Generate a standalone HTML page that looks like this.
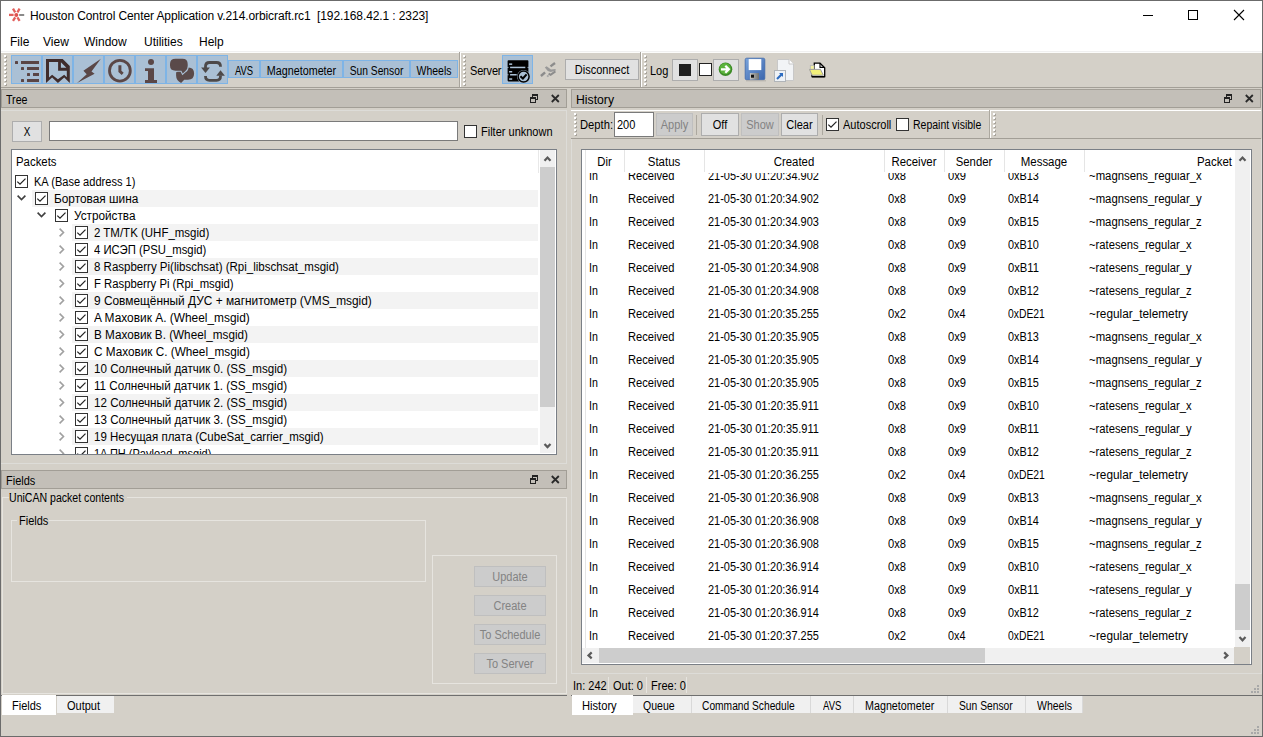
<!DOCTYPE html>
<html><head><meta charset="utf-8"><style>
html,body{margin:0;padding:0;}
body{width:1263px;height:737px;position:relative;overflow:hidden;background:#d4d0c8;font-family:"Liberation Sans", sans-serif;font-size:12px;color:#000;}
div{position:absolute;}
.t{white-space:nowrap;line-height:14px;font-size:12px;transform:scaleX(0.917);transform-origin:0 0;}
.tc{transform-origin:50% 0;}
.tr{transform-origin:100% 0;}
.m{white-space:nowrap;line-height:14px;font-size:12px;}
</style></head><body>
<div style="left:0px;top:0px;width:1263px;height:31px;background:#fff"></div>
<svg style="position:absolute;left:0px;top:0px;" width="30" height="30" viewBox="0 0 30 30"><g stroke="#e0524e" stroke-width="2.3" opacity="0.92"><line x1="9" y1="14.9" x2="13.6" y2="14.9"/><line x1="13" y1="8.7" x2="15.2" y2="12.4"/><line x1="19.6" y1="8.7" x2="17.4" y2="12.4"/><line x1="13" y1="20.9" x2="15.2" y2="17.4"/><line x1="19.6" y1="20.9" x2="17.4" y2="17.4"/></g><circle cx="16.3" cy="14.9" r="2" fill="#e0524e"/><rect x="19.2" y="14" width="5" height="2" fill="#8a8a8a"/></svg>
<div class="m" style="left:30px;top:9px;letter-spacing:-0.1px">Houston Control Center Application v.214.orbicraft.rc1&nbsp; [192.168.42.1 : 2323]</div>
<div style="left:1143px;top:15px;width:10px;height:1px;background:#000"></div>
<div style="left:1188px;top:10px;width:10px;height:10px;border:1px solid #000;box-sizing:border-box"></div>
<svg style="position:absolute;left:1233px;top:9px;" width="12" height="12" viewBox="0 0 12 12"><path d="M1 1L11 11M11 1L1 11" stroke="#000" stroke-width="1.1"/></svg>
<div style="left:0px;top:31px;width:1263px;height:21px;background:#fff"></div>
<div style="left:0px;top:51px;width:1263px;height:1px;background:#f0f0f0"></div>
<div class="m" style="left:10px;top:35px;">File</div>
<div class="m" style="left:43px;top:35px;">View</div>
<div class="m" style="left:84px;top:35px;">Window</div>
<div class="m" style="left:144px;top:35px;">Utilities</div>
<div class="m" style="left:199px;top:35px;">Help</div>
<div style="left:0px;top:52px;width:1263px;height:36px;background:#d4d0c8"></div>
<div style="left:0px;top:52px;width:1263px;height:1px;background:#fcfcfb"></div>
<div style="left:0px;top:87px;width:1263px;height:1px;background:#a39f97"></div>
<div style="left:5px;top:56px;width:2px;height:2px;background:#a8a49c"></div>
<div style="left:4px;top:55px;width:2px;height:2px;background:#fff"></div>
<div style="left:5px;top:60px;width:2px;height:2px;background:#a8a49c"></div>
<div style="left:4px;top:59px;width:2px;height:2px;background:#fff"></div>
<div style="left:5px;top:64px;width:2px;height:2px;background:#a8a49c"></div>
<div style="left:4px;top:63px;width:2px;height:2px;background:#fff"></div>
<div style="left:5px;top:68px;width:2px;height:2px;background:#a8a49c"></div>
<div style="left:4px;top:67px;width:2px;height:2px;background:#fff"></div>
<div style="left:5px;top:72px;width:2px;height:2px;background:#a8a49c"></div>
<div style="left:4px;top:71px;width:2px;height:2px;background:#fff"></div>
<div style="left:5px;top:76px;width:2px;height:2px;background:#a8a49c"></div>
<div style="left:4px;top:75px;width:2px;height:2px;background:#fff"></div>
<div style="left:5px;top:80px;width:2px;height:2px;background:#a8a49c"></div>
<div style="left:4px;top:79px;width:2px;height:2px;background:#fff"></div>
<div style="left:5px;top:84px;width:2px;height:2px;background:#a8a49c"></div>
<div style="left:4px;top:83px;width:2px;height:2px;background:#fff"></div>
<div style="left:11px;top:55px;width:31px;height:29px;background:#aac0d5;border:1px solid #7eb4e6;box-sizing:border-box"></div>
<svg style="position:absolute;left:11px;top:55px;" width="31" height="29" viewBox="0 0 31 29"><g fill="#5a4545"><rect x="4" y="6" width="3" height="3" rx="0.6"/><rect x="10" y="6" width="18" height="3"/><rect x="10" y="12" width="3" height="3" rx="0.6"/><rect x="16" y="12" width="12" height="3"/><rect x="16" y="18" width="3" height="3" rx="0.6"/><rect x="22" y="18" width="6" height="3"/><rect x="10" y="24" width="3" height="3" rx="0.6"/><rect x="16" y="24" width="12" height="3"/></g></svg>
<div style="left:42px;top:55px;width:31px;height:29px;background:#aac0d5;border:1px solid #7eb4e6;box-sizing:border-box"></div>
<svg style="position:absolute;left:42px;top:55px;" width="31" height="29" viewBox="0 0 31 29"><path fill="#3f2c2c" fill-rule="evenodd" d="M4 4 H20.7 L27.8 11.1 V27.9 L22.2 22.6 L15.9 27.9 L10.1 22.6 L4 27.9 Z M7 7 H16.1 V15.7 H24.8 V22.2 L22.2 19.8 L15.9 24.3 L10.1 19.8 L7 22.5 Z M18.9 7.2 V12.7 H24.4 Z"/></svg>
<div style="left:73px;top:55px;width:31px;height:29px;background:#aac0d5;border:1px solid #7eb4e6;box-sizing:border-box"></div>
<svg style="position:absolute;left:73px;top:55px;" width="31" height="29" viewBox="0 0 31 29"><path fill="#5a4747" d="M27.9 3.8 L10.4 15.7 L13.7 19.3 L4.1 27.9 L21.6 18.8 L18.5 16.5 Z"/></svg>
<div style="left:104px;top:55px;width:31px;height:29px;background:#aac0d5;border:1px solid #7eb4e6;box-sizing:border-box"></div>
<svg style="position:absolute;left:104px;top:55px;" width="31" height="29" viewBox="0 0 31 29"><circle cx="15.9" cy="15.7" r="10.4" fill="none" stroke="#5a4747" stroke-width="2.8"/><path d="M15.9 10.2 V16.4 L18.7 18.8" fill="none" stroke="#5a4747" stroke-width="3" stroke-linejoin="miter"/></svg>
<div style="left:135px;top:55px;width:31px;height:29px;background:#aac0d5;border:1px solid #7eb4e6;box-sizing:border-box"></div>
<svg style="position:absolute;left:135px;top:55px;" width="31" height="29" viewBox="0 0 31 29"><g fill="#5a4747"><circle cx="16" cy="6.9" r="3"/><path d="M10 13.2 H19 V25.1 H22 V28 H10 V25.1 H13 V16 H10 Z"/></g></svg>
<div style="left:166px;top:55px;width:31px;height:29px;background:#aac0d5;border:1px solid #7eb4e6;box-sizing:border-box"></div>
<svg style="position:absolute;left:166px;top:55px;" width="31" height="29" viewBox="0 0 31 29"><g fill="#5a4a4a"><path d="M16 12.5 H22.5 Q28.1 12.5 28.1 18.6 Q28.1 24.8 22 24.8 H18.2 L15.1 27.9 Q10.1 25.5 10.1 20.5 V17.5 Z"/><path d="M9.5 3.8 H16.5 Q21.7 3.8 21.7 9 V11 Q21.7 14.8 19.2 16.2 L16.7 18.5 L15.4 15.7 H9.5 Q4 15.7 4 10.5 V9 Q4 3.8 9.5 3.8 Z" stroke="#aac0d5" stroke-width="2.2"/><path d="M9.5 3.8 H16.5 Q21.7 3.8 21.7 9 V11 Q21.7 14.8 19.2 16.2 L16.7 18.5 L15.4 15.7 H9.5 Q4 15.7 4 10.5 V9 Q4 3.8 9.5 3.8 Z"/></g></svg>
<div style="left:197px;top:55px;width:31px;height:29px;background:#aac0d5;border:1px solid #7eb4e6;box-sizing:border-box"></div>
<svg style="position:absolute;left:197px;top:55px;" width="31" height="29" viewBox="0 0 31 29"><g fill="none" stroke="#4d4949" stroke-width="2.8"><path d="M8.5 13 V11.5 Q8.5 7.5 12.5 7.5 H19.5 Q23.5 7.5 23.5 11.5 V11.8"/><path d="M8.5 21 V21.3 Q8.5 25.3 12.5 25.3 H19.5 Q23.5 25.3 23.5 21.3 V20.5"/></g><g fill="#4d4949"><path d="M4.1 12.4 H12.9 L8.5 18 Z"/><path d="M19.3 20.8 H27.9 L23.5 15.2 Z"/></g></svg>
<div style="left:228px;top:60px;width:32px;height:18px;background:#aac0d5;border:1px solid #7eb4e6;box-sizing:border-box"></div>
<div class="t tc" style="left:228px;top:64px;width:32px;text-align:center;;transform:scaleX(0.7876)">AVS</div>
<div style="left:260px;top:60px;width:83px;height:18px;background:#aac0d5;border:1px solid #7eb4e6;box-sizing:border-box"></div>
<div class="t tc" style="left:260px;top:64px;width:83px;text-align:center;;transform:scaleX(0.8958)">Magnetometer</div>
<div style="left:343px;top:60px;width:67px;height:18px;background:#aac0d5;border:1px solid #7eb4e6;box-sizing:border-box"></div>
<div class="t tc" style="left:343px;top:64px;width:67px;text-align:center;;transform:scaleX(0.8550)">Sun Sensor</div>
<div style="left:410px;top:60px;width:48px;height:18px;background:#aac0d5;border:1px solid #7eb4e6;box-sizing:border-box"></div>
<div class="t tc" style="left:410px;top:64px;width:48px;text-align:center;;transform:scaleX(0.8722)">Wheels</div>
<div style="left:459px;top:52px;width:1px;height:35px;background:#a8a49c"></div>
<div style="left:460px;top:52px;width:1px;height:35px;background:#fff"></div>
<div style="left:464px;top:56px;width:2px;height:2px;background:#a8a49c"></div>
<div style="left:463px;top:55px;width:2px;height:2px;background:#fff"></div>
<div style="left:464px;top:60px;width:2px;height:2px;background:#a8a49c"></div>
<div style="left:463px;top:59px;width:2px;height:2px;background:#fff"></div>
<div style="left:464px;top:64px;width:2px;height:2px;background:#a8a49c"></div>
<div style="left:463px;top:63px;width:2px;height:2px;background:#fff"></div>
<div style="left:464px;top:68px;width:2px;height:2px;background:#a8a49c"></div>
<div style="left:463px;top:67px;width:2px;height:2px;background:#fff"></div>
<div style="left:464px;top:72px;width:2px;height:2px;background:#a8a49c"></div>
<div style="left:463px;top:71px;width:2px;height:2px;background:#fff"></div>
<div style="left:464px;top:76px;width:2px;height:2px;background:#a8a49c"></div>
<div style="left:463px;top:75px;width:2px;height:2px;background:#fff"></div>
<div style="left:464px;top:80px;width:2px;height:2px;background:#a8a49c"></div>
<div style="left:463px;top:79px;width:2px;height:2px;background:#fff"></div>
<div style="left:464px;top:84px;width:2px;height:2px;background:#a8a49c"></div>
<div style="left:463px;top:83px;width:2px;height:2px;background:#fff"></div>
<div class="t" style="left:470px;top:64px;letter-spacing:-0.2px">Server</div>
<div style="left:502px;top:55px;width:31px;height:29px;background:#aac0d5;border:1px solid #7eb4e6;box-sizing:border-box"></div>
<svg style="position:absolute;left:502px;top:55px;" width="31" height="29" viewBox="0 0 31 29"><rect x="5.6" y="5.3" width="20.8" height="21.1" rx="0.8" fill="#000"/><g fill="#aac0d5"><rect x="8.1" y="11.7" width="15.2" height="1.5"/><rect x="5.3" y="11.9" width="1.1" height="1.1"/><rect x="25.6" y="11.9" width="1.1" height="1.1"/><rect x="8.1" y="19" width="6.6" height="1.5"/><rect x="5.3" y="19.2" width="1.1" height="1.1"/><rect x="7.1" y="8.4" width="3.1" height="1.5"/><rect x="7.1" y="16" width="3.1" height="1.5"/><rect x="7.1" y="23.3" width="3.1" height="1.5"/></g><circle cx="21.6" cy="21.6" r="6.6" fill="#aac0d5"/><circle cx="21.6" cy="21.6" r="5.5" fill="#aac0d5" stroke="#000" stroke-width="1.5"/><path d="M18.4 21.2 L20.9 23.5 L24.6 19.4" stroke="#000" stroke-width="2.1" fill="none"/></svg>
<svg style="position:absolute;left:0px;top:0px;" width="600" height="90" viewBox="0 0 600 90"><g stroke="#8c8c8c" stroke-width="2.4" fill="none"><path d="M540.9 76 L545.1 72.4"/><path d="M550.5 66.4 L555 63"/><path d="M548.6 73.6 L550.6 74.8 L555.4 71.4" stroke-width="2"/></g><path d="M544.8 67.6 L546.6 66.2 L551 69.5 L555.6 69 L555.6 70.8 L550.6 71.9 L547.8 71 Z" fill="#999"/><circle cx="547.8" cy="76.1" r="1.1" fill="#a8a8a8"/></svg>
<div style="left:565px;top:59px;width:74px;height:21px;background:#e1e1e1;border:1px solid #adadad;box-sizing:border-box"></div>
<div class="t tc" style="left:565px;top:63px;width:74px;text-align:center;">Disconnect</div>
<div style="left:640px;top:52px;width:1px;height:35px;background:#a8a49c"></div>
<div style="left:641px;top:52px;width:1px;height:35px;background:#fff"></div>
<div style="left:645px;top:56px;width:2px;height:2px;background:#a8a49c"></div>
<div style="left:644px;top:55px;width:2px;height:2px;background:#fff"></div>
<div style="left:645px;top:60px;width:2px;height:2px;background:#a8a49c"></div>
<div style="left:644px;top:59px;width:2px;height:2px;background:#fff"></div>
<div style="left:645px;top:64px;width:2px;height:2px;background:#a8a49c"></div>
<div style="left:644px;top:63px;width:2px;height:2px;background:#fff"></div>
<div style="left:645px;top:68px;width:2px;height:2px;background:#a8a49c"></div>
<div style="left:644px;top:67px;width:2px;height:2px;background:#fff"></div>
<div style="left:645px;top:72px;width:2px;height:2px;background:#a8a49c"></div>
<div style="left:644px;top:71px;width:2px;height:2px;background:#fff"></div>
<div style="left:645px;top:76px;width:2px;height:2px;background:#a8a49c"></div>
<div style="left:644px;top:75px;width:2px;height:2px;background:#fff"></div>
<div style="left:645px;top:80px;width:2px;height:2px;background:#a8a49c"></div>
<div style="left:644px;top:79px;width:2px;height:2px;background:#fff"></div>
<div style="left:645px;top:84px;width:2px;height:2px;background:#a8a49c"></div>
<div style="left:644px;top:83px;width:2px;height:2px;background:#fff"></div>
<div class="t" style="left:650px;top:64px;">Log</div>
<div style="left:672px;top:59px;width:26px;height:22px;background:#e1e1e1;border:1px solid #adadad;box-sizing:border-box"></div>
<div style="left:679px;top:64px;width:12px;height:12px;background:#1e1e1e"></div>
<div style="left:699px;top:63px;width:13px;height:13px;background:#fff;border:1px solid #222;box-sizing:border-box"></div>
<div style="left:713px;top:59px;width:26px;height:22px;background:#e1e1e1;border:1px solid #adadad;box-sizing:border-box"></div>
<svg style="position:absolute;left:717px;top:61px;" width="17" height="17" viewBox="0 0 17 17"><circle cx="8.5" cy="8.3" r="6.8" fill="#3b8a26"/><circle cx="8.2" cy="7.6" r="5.6" fill="#5cb33c"/><path d="M4 8.3 H11.5 M8.3 4.8 L11.8 8.3 L8.3 11.8" stroke="#fff" stroke-width="2.3" fill="none"/></svg>
<svg style="position:absolute;left:744px;top:57px;" width="23" height="25" viewBox="0 0 23 25"><defs><linearGradient id="fg" x1="0" y1="0" x2="1" y2="1"><stop offset="0" stop-color="#7aa4dc"/><stop offset="1" stop-color="#3b66ad"/></linearGradient><linearGradient id="sg" x1="0" y1="0" x2="1" y2="0"><stop offset="0" stop-color="#c8c8c4"/><stop offset="1" stop-color="#707270"/></linearGradient></defs><rect x="1.2" y="1.2" width="19.6" height="21.6" rx="1.5" fill="url(#fg)" stroke="#3d68ac" stroke-width="0.8"/><rect x="4.7" y="2.1" width="12.6" height="11" fill="#fff"/><rect x="5.9" y="16.1" width="9.1" height="6.5" fill="url(#sg)"/><rect x="7" y="17.7" width="3" height="3" fill="#111"/><rect x="2" y="23.3" width="20" height="1" fill="#b4b0a8"/></svg>
<svg style="position:absolute;left:773px;top:58px;" width="22" height="25" viewBox="0 0 22 25"><path d="M4.5 1.5 H16 L20.5 6 V22.5 H4.5 Z" fill="#f2f4f6" stroke="#c8c8c8"/><path d="M16 1.5 V6 H20.5" fill="#fff" stroke="#c8c8c8"/><rect x="1.5" y="12.5" width="11" height="11" fill="#eef2f6" stroke="#b0b4b8"/><path d="M4 21 L9 16" stroke="#2d6cc0" stroke-width="2.2" fill="none"/><path d="M6 15 H10 V19 Z" fill="#2d6cc0"/></svg>
<svg style="position:absolute;left:804px;top:58px;" width="26" height="24" viewBox="0 0 26 24"><path d="M10.3 5.2 H16 L20.7 9.8 V18.7 H8 V11 H10.3 Z" fill="#fff" stroke="#000" stroke-width="1.3"/><path d="M16 5.2 V9.4 H20" fill="none" stroke="#000" stroke-width="1.1"/><rect x="6.3" y="7.5" width="3.8" height="4" fill="#f4f2a0" stroke="#b8b8b8" stroke-width="0.8"/><path d="M5.5 11.4 H16.5 L19.3 17.2 H8 Z" fill="#f2f07a" stroke="#a0a0a0" stroke-width="1"/><path d="M8 18.7 H20.7" stroke="#000" stroke-width="1.5"/></svg>
<div style="left:1px;top:89px;width:566px;height:19px;background:#c3bfb8;border:1px solid #a29e96;box-sizing:border-box"></div>
<div class="t" style="left:6px;top:93px;;transform:scaleX(0.8872)">Tree</div>
<svg style="position:absolute;left:530px;top:93px;" width="10" height="11" viewBox="0 0 10 11"><g fill="none" stroke="#222" stroke-width="1"><rect x="2.5" y="1.5" width="5" height="5"/><rect x="0.5" y="4.5" width="5" height="5" fill="#c3bfb8"/></g><rect x="2" y="1" width="6" height="2" fill="#222"/><rect x="0" y="4" width="6" height="2" fill="#222"/></svg>
<svg style="position:absolute;left:551px;top:94px;" width="9" height="9" viewBox="0 0 9 9"><path d="M0.8 1L7.8 8M7.8 1L0.8 8" stroke="#2a2a2a" stroke-width="1.8"/></svg>
<div style="left:571px;top:89px;width:690px;height:19px;background:#c3bfb8;border:1px solid #a29e96;box-sizing:border-box"></div>
<div class="t" style="left:576px;top:93px;;transform:scaleX(1.0176)">History</div>
<svg style="position:absolute;left:1224px;top:93px;" width="10" height="11" viewBox="0 0 10 11"><g fill="none" stroke="#222" stroke-width="1"><rect x="2.5" y="1.5" width="5" height="5"/><rect x="0.5" y="4.5" width="5" height="5" fill="#c3bfb8"/></g><rect x="2" y="1" width="6" height="2" fill="#222"/><rect x="0" y="4" width="6" height="2" fill="#222"/></svg>
<svg style="position:absolute;left:1245px;top:94px;" width="9" height="9" viewBox="0 0 9 9"><path d="M0.8 1L7.8 8M7.8 1L0.8 8" stroke="#2a2a2a" stroke-width="1.8"/></svg>
<div style="left:1px;top:110px;width:566px;height:1px;background:#dddcd8"></div>
<div style="left:566px;top:110px;width:1px;height:354px;background:#dddcd8"></div>
<div style="left:1px;top:463px;width:566px;height:1px;background:#dddcd8"></div>
<div style="left:12px;top:121px;width:30px;height:21px;background:#e1e1e1;border:1px solid #adadad;box-sizing:border-box"></div>
<div class="t tc" style="left:12px;top:125px;width:30px;text-align:center;letter-spacing:0;transform:scaleX(0.8250)">X</div>
<div style="left:49px;top:121px;width:409px;height:20px;background:#fff;border:1px solid #7a7a7a;box-sizing:border-box"></div>
<div style="left:464px;top:125px;width:13px;height:13px;background:#fff;border:1px solid #333;box-sizing:border-box"></div>
<div class="t" style="left:481px;top:125px;">Filter unknown</div>
<div style="left:11px;top:149px;width:546px;height:306px;background:#fff;border:1px solid #7a7f86;box-sizing:border-box"></div>
<div class="t" style="left:16px;top:155px;;transform:scaleX(0.9491)">Packets</div>
<div style="left:12px;top:173px;width:528px;height:281px;overflow:hidden">
<div style="left:3px;top:2px;width:13px;height:13px;background:#fff;border:1px solid #333;box-sizing:border-box"></div>
<svg style="position:absolute;left:3px;top:2px;" width="13" height="13" viewBox="0 0 13 13"><path d="M2.3 6.6 L5 9.2 L10.5 3.6" stroke="#222" stroke-width="1.25" fill="none"/></svg>
<div class="t" style="left:22px;top:2px;;transform:scaleX(0.9206)">KA (Base address 1)</div>
<div style="left:20px;top:17px;width:506px;height:17px;background:#f3f3f3"></div>
<div style="left:23px;top:19px;width:13px;height:13px;background:#fff;border:1px solid #333;box-sizing:border-box"></div>
<svg style="position:absolute;left:23px;top:19px;" width="13" height="13" viewBox="0 0 13 13"><path d="M2.3 6.6 L5 9.2 L10.5 3.6" stroke="#222" stroke-width="1.25" fill="none"/></svg>
<svg style="position:absolute;left:5px;top:22px;" width="9" height="6" viewBox="0 0 9 6"><path d="M0.6 0.6 L4.5 4.5 L8.4 0.6" stroke="#404040" stroke-width="1.6" fill="none"/></svg>
<div class="t" style="left:42px;top:19px;;transform:scaleX(0.9878)">Бортовая шина</div>
<div style="left:43px;top:36px;width:13px;height:13px;background:#fff;border:1px solid #333;box-sizing:border-box"></div>
<svg style="position:absolute;left:43px;top:36px;" width="13" height="13" viewBox="0 0 13 13"><path d="M2.3 6.6 L5 9.2 L10.5 3.6" stroke="#222" stroke-width="1.25" fill="none"/></svg>
<svg style="position:absolute;left:25px;top:39px;" width="9" height="6" viewBox="0 0 9 6"><path d="M0.6 0.6 L4.5 4.5 L8.4 0.6" stroke="#404040" stroke-width="1.6" fill="none"/></svg>
<div class="t" style="left:62px;top:36px;;transform:scaleX(0.9796)">Устройства</div>
<div style="left:60px;top:51px;width:466px;height:17px;background:#f3f3f3"></div>
<div style="left:63px;top:53px;width:13px;height:13px;background:#fff;border:1px solid #333;box-sizing:border-box"></div>
<svg style="position:absolute;left:63px;top:53px;" width="13" height="13" viewBox="0 0 13 13"><path d="M2.3 6.6 L5 9.2 L10.5 3.6" stroke="#222" stroke-width="1.25" fill="none"/></svg>
<svg style="position:absolute;left:47px;top:55px;" width="6" height="9" viewBox="0 0 6 9"><path d="M0.6 0.6 L4.5 4.5 L0.6 8.4" stroke="#a0a0a0" stroke-width="1.6" fill="none"/></svg>
<div class="t" style="left:82px;top:53px;;transform:scaleX(0.9564)">2 TM/TK (UHF_msgid)</div>
<div style="left:63px;top:70px;width:13px;height:13px;background:#fff;border:1px solid #333;box-sizing:border-box"></div>
<svg style="position:absolute;left:63px;top:70px;" width="13" height="13" viewBox="0 0 13 13"><path d="M2.3 6.6 L5 9.2 L10.5 3.6" stroke="#222" stroke-width="1.25" fill="none"/></svg>
<svg style="position:absolute;left:47px;top:72px;" width="6" height="9" viewBox="0 0 6 9"><path d="M0.6 0.6 L4.5 4.5 L0.6 8.4" stroke="#a0a0a0" stroke-width="1.6" fill="none"/></svg>
<div class="t" style="left:82px;top:70px;;transform:scaleX(0.9421)">4 ИСЭП (PSU_msgid)</div>
<div style="left:60px;top:85px;width:466px;height:17px;background:#f3f3f3"></div>
<div style="left:63px;top:87px;width:13px;height:13px;background:#fff;border:1px solid #333;box-sizing:border-box"></div>
<svg style="position:absolute;left:63px;top:87px;" width="13" height="13" viewBox="0 0 13 13"><path d="M2.3 6.6 L5 9.2 L10.5 3.6" stroke="#222" stroke-width="1.25" fill="none"/></svg>
<svg style="position:absolute;left:47px;top:89px;" width="6" height="9" viewBox="0 0 6 9"><path d="M0.6 0.6 L4.5 4.5 L0.6 8.4" stroke="#a0a0a0" stroke-width="1.6" fill="none"/></svg>
<div class="t" style="left:82px;top:87px;;transform:scaleX(0.9587)">8 Raspberry Pi(libschsat) (Rpi_libschsat_msgid)</div>
<div style="left:63px;top:104px;width:13px;height:13px;background:#fff;border:1px solid #333;box-sizing:border-box"></div>
<svg style="position:absolute;left:63px;top:104px;" width="13" height="13" viewBox="0 0 13 13"><path d="M2.3 6.6 L5 9.2 L10.5 3.6" stroke="#222" stroke-width="1.25" fill="none"/></svg>
<svg style="position:absolute;left:47px;top:106px;" width="6" height="9" viewBox="0 0 6 9"><path d="M0.6 0.6 L4.5 4.5 L0.6 8.4" stroke="#a0a0a0" stroke-width="1.6" fill="none"/></svg>
<div class="t" style="left:82px;top:104px;;transform:scaleX(0.9429)">F Raspberry Pi (Rpi_msgid)</div>
<div style="left:60px;top:119px;width:466px;height:17px;background:#f3f3f3"></div>
<div style="left:63px;top:121px;width:13px;height:13px;background:#fff;border:1px solid #333;box-sizing:border-box"></div>
<svg style="position:absolute;left:63px;top:121px;" width="13" height="13" viewBox="0 0 13 13"><path d="M2.3 6.6 L5 9.2 L10.5 3.6" stroke="#222" stroke-width="1.25" fill="none"/></svg>
<svg style="position:absolute;left:47px;top:123px;" width="6" height="9" viewBox="0 0 6 9"><path d="M0.6 0.6 L4.5 4.5 L0.6 8.4" stroke="#a0a0a0" stroke-width="1.6" fill="none"/></svg>
<div class="t" style="left:82px;top:121px;;transform:scaleX(0.9902)">9 Совмещённый ДУС + магнитометр (VMS_msgid)</div>
<div style="left:63px;top:138px;width:13px;height:13px;background:#fff;border:1px solid #333;box-sizing:border-box"></div>
<svg style="position:absolute;left:63px;top:138px;" width="13" height="13" viewBox="0 0 13 13"><path d="M2.3 6.6 L5 9.2 L10.5 3.6" stroke="#222" stroke-width="1.25" fill="none"/></svg>
<svg style="position:absolute;left:47px;top:140px;" width="6" height="9" viewBox="0 0 6 9"><path d="M0.6 0.6 L4.5 4.5 L0.6 8.4" stroke="#a0a0a0" stroke-width="1.6" fill="none"/></svg>
<div class="t" style="left:82px;top:138px;;transform:scaleX(0.9922)">A Маховик A. (Wheel_msgid)</div>
<div style="left:60px;top:153px;width:466px;height:17px;background:#f3f3f3"></div>
<div style="left:63px;top:155px;width:13px;height:13px;background:#fff;border:1px solid #333;box-sizing:border-box"></div>
<svg style="position:absolute;left:63px;top:155px;" width="13" height="13" viewBox="0 0 13 13"><path d="M2.3 6.6 L5 9.2 L10.5 3.6" stroke="#222" stroke-width="1.25" fill="none"/></svg>
<svg style="position:absolute;left:47px;top:157px;" width="6" height="9" viewBox="0 0 6 9"><path d="M0.6 0.6 L4.5 4.5 L0.6 8.4" stroke="#a0a0a0" stroke-width="1.6" fill="none"/></svg>
<div class="t" style="left:82px;top:155px;;transform:scaleX(0.9760)">B Маховик B. (Wheel_msgid)</div>
<div style="left:63px;top:172px;width:13px;height:13px;background:#fff;border:1px solid #333;box-sizing:border-box"></div>
<svg style="position:absolute;left:63px;top:172px;" width="13" height="13" viewBox="0 0 13 13"><path d="M2.3 6.6 L5 9.2 L10.5 3.6" stroke="#222" stroke-width="1.25" fill="none"/></svg>
<svg style="position:absolute;left:47px;top:174px;" width="6" height="9" viewBox="0 0 6 9"><path d="M0.6 0.6 L4.5 4.5 L0.6 8.4" stroke="#a0a0a0" stroke-width="1.6" fill="none"/></svg>
<div class="t" style="left:82px;top:172px;;transform:scaleX(0.9797)">C Маховик C. (Wheel_msgid)</div>
<div style="left:60px;top:187px;width:466px;height:17px;background:#f3f3f3"></div>
<div style="left:63px;top:189px;width:13px;height:13px;background:#fff;border:1px solid #333;box-sizing:border-box"></div>
<svg style="position:absolute;left:63px;top:189px;" width="13" height="13" viewBox="0 0 13 13"><path d="M2.3 6.6 L5 9.2 L10.5 3.6" stroke="#222" stroke-width="1.25" fill="none"/></svg>
<svg style="position:absolute;left:47px;top:191px;" width="6" height="9" viewBox="0 0 6 9"><path d="M0.6 0.6 L4.5 4.5 L0.6 8.4" stroke="#a0a0a0" stroke-width="1.6" fill="none"/></svg>
<div class="t" style="left:82px;top:189px;;transform:scaleX(0.9667)">10 Солнечный датчик 0. (SS_msgid)</div>
<div style="left:63px;top:206px;width:13px;height:13px;background:#fff;border:1px solid #333;box-sizing:border-box"></div>
<svg style="position:absolute;left:63px;top:206px;" width="13" height="13" viewBox="0 0 13 13"><path d="M2.3 6.6 L5 9.2 L10.5 3.6" stroke="#222" stroke-width="1.25" fill="none"/></svg>
<svg style="position:absolute;left:47px;top:208px;" width="6" height="9" viewBox="0 0 6 9"><path d="M0.6 0.6 L4.5 4.5 L0.6 8.4" stroke="#a0a0a0" stroke-width="1.6" fill="none"/></svg>
<div class="t" style="left:82px;top:206px;;transform:scaleX(0.9711)">11 Солнечный датчик 1. (SS_msgid)</div>
<div style="left:60px;top:221px;width:466px;height:17px;background:#f3f3f3"></div>
<div style="left:63px;top:223px;width:13px;height:13px;background:#fff;border:1px solid #333;box-sizing:border-box"></div>
<svg style="position:absolute;left:63px;top:223px;" width="13" height="13" viewBox="0 0 13 13"><path d="M2.3 6.6 L5 9.2 L10.5 3.6" stroke="#222" stroke-width="1.25" fill="none"/></svg>
<svg style="position:absolute;left:47px;top:225px;" width="6" height="9" viewBox="0 0 6 9"><path d="M0.6 0.6 L4.5 4.5 L0.6 8.4" stroke="#a0a0a0" stroke-width="1.6" fill="none"/></svg>
<div class="t" style="left:82px;top:223px;;transform:scaleX(0.9667)">12 Солнечный датчик 2. (SS_msgid)</div>
<div style="left:63px;top:240px;width:13px;height:13px;background:#fff;border:1px solid #333;box-sizing:border-box"></div>
<svg style="position:absolute;left:63px;top:240px;" width="13" height="13" viewBox="0 0 13 13"><path d="M2.3 6.6 L5 9.2 L10.5 3.6" stroke="#222" stroke-width="1.25" fill="none"/></svg>
<svg style="position:absolute;left:47px;top:242px;" width="6" height="9" viewBox="0 0 6 9"><path d="M0.6 0.6 L4.5 4.5 L0.6 8.4" stroke="#a0a0a0" stroke-width="1.6" fill="none"/></svg>
<div class="t" style="left:82px;top:240px;;transform:scaleX(0.9667)">13 Солнечный датчик 3. (SS_msgid)</div>
<div style="left:60px;top:255px;width:466px;height:17px;background:#f3f3f3"></div>
<div style="left:63px;top:257px;width:13px;height:13px;background:#fff;border:1px solid #333;box-sizing:border-box"></div>
<svg style="position:absolute;left:63px;top:257px;" width="13" height="13" viewBox="0 0 13 13"><path d="M2.3 6.6 L5 9.2 L10.5 3.6" stroke="#222" stroke-width="1.25" fill="none"/></svg>
<svg style="position:absolute;left:47px;top:259px;" width="6" height="9" viewBox="0 0 6 9"><path d="M0.6 0.6 L4.5 4.5 L0.6 8.4" stroke="#a0a0a0" stroke-width="1.6" fill="none"/></svg>
<div class="t" style="left:82px;top:257px;;transform:scaleX(0.9578)">19 Несущая плата (CubeSat_carrier_msgid)</div>
<div style="left:63px;top:274px;width:13px;height:13px;background:#fff;border:1px solid #333;box-sizing:border-box"></div>
<svg style="position:absolute;left:63px;top:274px;" width="13" height="13" viewBox="0 0 13 13"><path d="M2.3 6.6 L5 9.2 L10.5 3.6" stroke="#222" stroke-width="1.25" fill="none"/></svg>
<svg style="position:absolute;left:47px;top:276px;" width="6" height="9" viewBox="0 0 6 9"><path d="M0.6 0.6 L4.5 4.5 L0.6 8.4" stroke="#a0a0a0" stroke-width="1.6" fill="none"/></svg>
<div class="t" style="left:82px;top:274px;">1A ПН (Payload_msgid)</div>
</div>
<div style="left:540px;top:150px;width:15px;height:303px;background:#f0f0f0"></div>
<div style="left:540px;top:167px;width:15px;height:240px;background:#cdcdcd"></div>
<svg style="position:absolute;left:0;top:0" width="1263" height="737"><path d="M544.5 160.79999999999998 L547.5 157.6 L550.5 160.79999999999998" stroke="#5a5a5a" stroke-width="2.2" fill="none"/></svg>
<div style="left:538px;top:150px;width:1px;height:23px;background:#e8e8e8"></div>
<svg style="position:absolute;left:0;top:0" width="1263" height="737"><path d="M544.5 443.9 L547.5 447.1 L550.5 443.9" stroke="#5a5a5a" stroke-width="2.2" fill="none"/></svg>
<div style="left:1px;top:470px;width:566px;height:19px;background:#c3bfb8;border:1px solid #a29e96;box-sizing:border-box"></div>
<div class="t" style="left:6px;top:474px;;transform:scaleX(0.9152)">Fields</div>
<svg style="position:absolute;left:530px;top:474px;" width="10" height="11" viewBox="0 0 10 11"><g fill="none" stroke="#222" stroke-width="1"><rect x="2.5" y="1.5" width="5" height="5"/><rect x="0.5" y="4.5" width="5" height="5" fill="#c3bfb8"/></g><rect x="2" y="1" width="6" height="2" fill="#222"/><rect x="0" y="4" width="6" height="2" fill="#222"/></svg>
<svg style="position:absolute;left:551px;top:475px;" width="9" height="9" viewBox="0 0 9 9"><path d="M0.8 1L7.8 8M7.8 1L0.8 8" stroke="#2a2a2a" stroke-width="1.8"/></svg>
<div class="t" style="left:9px;top:491px;;transform:scaleX(0.8799)">UniCAN packet contents</div>
<div style="left:2px;top:497px;width:565px;height:197px;border:1px solid #e6e4df;box-sizing:border-box"></div>
<div style="left:9px;top:494px;width:118px;height:8px;background:#d4d0c8"></div>
<div class="t" style="left:9px;top:491px;;transform:scaleX(0.8799)">UniCAN packet contents</div>
<div style="left:11px;top:520px;width:415px;height:62px;border:1px solid #e6e4df;box-sizing:border-box"></div>
<div style="left:17px;top:515px;width:32px;height:8px;background:#d4d0c8"></div>
<div class="t" style="left:19px;top:514px;">Fields</div>
<div style="left:432px;top:555px;width:125px;height:129px;border:1px solid #e6e4df;box-sizing:border-box"></div>
<div style="left:474px;top:566px;width:72px;height:21px;background:#cccccc;border:1px solid #bfbfbf;box-sizing:border-box"></div>
<div class="t tc" style="left:474px;top:570px;width:72px;text-align:center;color:#838383">Update</div>
<div style="left:474px;top:595px;width:72px;height:21px;background:#cccccc;border:1px solid #bfbfbf;box-sizing:border-box"></div>
<div class="t tc" style="left:474px;top:599px;width:72px;text-align:center;color:#838383">Create</div>
<div style="left:474px;top:624px;width:72px;height:21px;background:#cccccc;border:1px solid #bfbfbf;box-sizing:border-box"></div>
<div class="t tc" style="left:474px;top:628px;width:72px;text-align:center;color:#838383">To Schedule</div>
<div style="left:474px;top:653px;width:72px;height:21px;background:#cccccc;border:1px solid #bfbfbf;box-sizing:border-box"></div>
<div class="t tc" style="left:474px;top:657px;width:72px;text-align:center;color:#838383">To Server</div>
<div style="left:1px;top:695px;width:566px;height:1px;background:#6f6f6f"></div>
<div style="left:2px;top:695px;width:54px;height:20px;background:#fff"></div>
<div class="t" style="left:12px;top:699px;">Fields</div>
<div style="left:57px;top:696px;width:57px;height:17px;background:#f0f0f0"></div>
<div class="t" style="left:67px;top:699px;">Output</div>
<div style="left:571px;top:110px;width:690px;height:1px;background:#fff"></div>
<div style="left:575px;top:114px;width:2px;height:2px;background:#a8a49c"></div>
<div style="left:574px;top:113px;width:2px;height:2px;background:#fff"></div>
<div style="left:575px;top:118px;width:2px;height:2px;background:#a8a49c"></div>
<div style="left:574px;top:117px;width:2px;height:2px;background:#fff"></div>
<div style="left:575px;top:122px;width:2px;height:2px;background:#a8a49c"></div>
<div style="left:574px;top:121px;width:2px;height:2px;background:#fff"></div>
<div style="left:575px;top:126px;width:2px;height:2px;background:#a8a49c"></div>
<div style="left:574px;top:125px;width:2px;height:2px;background:#fff"></div>
<div style="left:575px;top:130px;width:2px;height:2px;background:#a8a49c"></div>
<div style="left:574px;top:129px;width:2px;height:2px;background:#fff"></div>
<div style="left:575px;top:134px;width:2px;height:2px;background:#a8a49c"></div>
<div style="left:574px;top:133px;width:2px;height:2px;background:#fff"></div>
<div class="t" style="left:580px;top:118px;;transform:scaleX(0.9337)">Depth:</div>
<div style="left:614px;top:112px;width:40px;height:25px;background:#fff;border:1px solid #7a7a7a;box-sizing:border-box"></div>
<div class="t" style="left:617px;top:118px;">200</div>
<div style="left:656px;top:113px;width:37px;height:23px;background:#cccccc;border:1px solid #bfbfbf;box-sizing:border-box"></div>
<div class="t tc" style="left:656px;top:118px;width:37px;text-align:center;color:#838383">Apply</div>
<div style="left:696px;top:115px;width:1px;height:20px;background:#aca89f"></div>
<div style="left:701px;top:113px;width:38px;height:23px;background:#e1e1e1;border:1px solid #adadad;box-sizing:border-box"></div>
<div class="t tc" style="left:701px;top:118px;width:38px;text-align:center;">Off</div>
<div style="left:741px;top:113px;width:38px;height:23px;background:#cccccc;border:1px solid #bfbfbf;box-sizing:border-box"></div>
<div class="t tc" style="left:741px;top:118px;width:38px;text-align:center;color:#838383">Show</div>
<div style="left:781px;top:113px;width:37px;height:23px;background:#e1e1e1;border:1px solid #adadad;box-sizing:border-box"></div>
<div class="t tc" style="left:781px;top:118px;width:37px;text-align:center;">Clear</div>
<div style="left:822px;top:115px;width:1px;height:20px;background:#aca89f"></div>
<div style="left:826px;top:118px;width:13px;height:13px;background:#fff;border:1px solid #333;box-sizing:border-box"></div>
<svg style="position:absolute;left:826px;top:118px;" width="13" height="13" viewBox="0 0 13 13"><path d="M2.3 6.6 L5 9.2 L10.5 3.6" stroke="#222" stroke-width="1.25" fill="none"/></svg>
<div class="t" style="left:843px;top:118px;">Autoscroll</div>
<div style="left:896px;top:118px;width:13px;height:13px;background:#fff;border:1px solid #333;box-sizing:border-box"></div>
<div class="t" style="left:913px;top:118px;;transform:scaleX(0.8751)">Repaint visible</div>
<div style="left:989px;top:110px;width:1px;height:29px;background:#aca89f"></div>
<div style="left:990px;top:110px;width:1px;height:28px;background:#fff"></div>
<div style="left:994px;top:114px;width:2px;height:2px;background:#a8a49c"></div>
<div style="left:993px;top:113px;width:2px;height:2px;background:#fff"></div>
<div style="left:994px;top:118px;width:2px;height:2px;background:#a8a49c"></div>
<div style="left:993px;top:117px;width:2px;height:2px;background:#fff"></div>
<div style="left:994px;top:122px;width:2px;height:2px;background:#a8a49c"></div>
<div style="left:993px;top:121px;width:2px;height:2px;background:#fff"></div>
<div style="left:994px;top:126px;width:2px;height:2px;background:#a8a49c"></div>
<div style="left:993px;top:125px;width:2px;height:2px;background:#fff"></div>
<div style="left:994px;top:130px;width:2px;height:2px;background:#a8a49c"></div>
<div style="left:993px;top:129px;width:2px;height:2px;background:#fff"></div>
<div style="left:994px;top:134px;width:2px;height:2px;background:#a8a49c"></div>
<div style="left:993px;top:133px;width:2px;height:2px;background:#fff"></div>
<div style="left:571px;top:138px;width:690px;height:1px;background:#a29e96"></div>
<div style="left:571px;top:139px;width:1px;height:535px;background:#dddcd8"></div>
<div style="left:571px;top:673px;width:691px;height:1px;background:#dddcd8"></div>
<div style="left:1261px;top:139px;width:1px;height:535px;background:#dddcd8"></div>
<div style="left:581px;top:149px;width:671px;height:516px;background:#fff;border:1px solid #7a7f86;box-sizing:border-box"></div>
<div style="left:585px;top:150px;width:1px;height:498px;background:#e5e5e5"></div>
<div class="t tc" style="left:585px;top:155px;width:39px;text-align:center;;transform:scaleX(0.9450)">Dir</div>
<div style="left:624px;top:150px;width:1px;height:22px;background:#e5e5e5"></div>
<div class="t tc" style="left:624px;top:155px;width:80px;text-align:center;;transform:scaleX(0.9559)">Status</div>
<div style="left:704px;top:150px;width:1px;height:22px;background:#e5e5e5"></div>
<div class="t tc" style="left:704px;top:155px;width:180px;text-align:center;;transform:scaleX(0.9488)">Created</div>
<div style="left:884px;top:150px;width:1px;height:22px;background:#e5e5e5"></div>
<div class="t tc" style="left:884px;top:155px;width:60px;text-align:center;;transform:scaleX(0.9502)">Receiver</div>
<div style="left:944px;top:150px;width:1px;height:22px;background:#e5e5e5"></div>
<div class="t tc" style="left:944px;top:155px;width:60px;text-align:center;;transform:scaleX(0.9435)">Sender</div>
<div style="left:1004px;top:150px;width:1px;height:22px;background:#e5e5e5"></div>
<div class="t tc" style="left:1004px;top:155px;width:80px;text-align:center;;transform:scaleX(0.9551)">Message</div>
<div style="left:1084px;top:150px;width:1px;height:22px;background:#e5e5e5"></div>
<div class="t tr" style="left:832px;top:155px;width:400px;text-align:right;;transform:scaleX(0.9544)">Packet</div>
<div style="left:1235px;top:150px;width:1px;height:22px;background:#e5e5e5"></div>
<div style="left:582px;top:173px;width:653px;height:475px;overflow:hidden">
<div class="t" style="left:7px;top:-4px;;transform:scaleX(0.8900)">In</div>
<div class="t" style="left:46px;top:-4px;;transform:scaleX(0.9274)">Received</div>
<div class="t" style="left:126px;top:-4px;;transform:scaleX(0.9128)">21-05-30 01:20:34.902</div>
<div class="t" style="left:306px;top:-4px;;transform:scaleX(0.9305)">0x8</div>
<div class="t" style="left:366px;top:-4px;;transform:scaleX(0.9305)">0x9</div>
<div class="t" style="left:426px;top:-4px;;transform:scaleX(0.9084)">0xB13</div>
<div class="t" style="left:507px;top:-4px;;transform:scaleX(0.9464)">~magnsens_regular_x</div>
<div class="t" style="left:7px;top:19px;;transform:scaleX(0.8900)">In</div>
<div class="t" style="left:46px;top:19px;;transform:scaleX(0.9274)">Received</div>
<div class="t" style="left:126px;top:19px;;transform:scaleX(0.9128)">21-05-30 01:20:34.902</div>
<div class="t" style="left:306px;top:19px;;transform:scaleX(0.9305)">0x8</div>
<div class="t" style="left:366px;top:19px;;transform:scaleX(0.9305)">0x9</div>
<div class="t" style="left:426px;top:19px;;transform:scaleX(0.9084)">0xB14</div>
<div class="t" style="left:507px;top:19px;;transform:scaleX(0.9464)">~magnsens_regular_y</div>
<div class="t" style="left:7px;top:42px;;transform:scaleX(0.8900)">In</div>
<div class="t" style="left:46px;top:42px;;transform:scaleX(0.9274)">Received</div>
<div class="t" style="left:126px;top:42px;;transform:scaleX(0.9128)">21-05-30 01:20:34.903</div>
<div class="t" style="left:306px;top:42px;;transform:scaleX(0.9305)">0x8</div>
<div class="t" style="left:366px;top:42px;;transform:scaleX(0.9305)">0x9</div>
<div class="t" style="left:426px;top:42px;;transform:scaleX(0.9084)">0xB15</div>
<div class="t" style="left:507px;top:42px;;transform:scaleX(0.9464)">~magnsens_regular_z</div>
<div class="t" style="left:7px;top:65px;;transform:scaleX(0.8900)">In</div>
<div class="t" style="left:46px;top:65px;;transform:scaleX(0.9274)">Received</div>
<div class="t" style="left:126px;top:65px;;transform:scaleX(0.9128)">21-05-30 01:20:34.908</div>
<div class="t" style="left:306px;top:65px;;transform:scaleX(0.9305)">0x8</div>
<div class="t" style="left:366px;top:65px;;transform:scaleX(0.9305)">0x9</div>
<div class="t" style="left:426px;top:65px;;transform:scaleX(0.9084)">0xB10</div>
<div class="t" style="left:507px;top:65px;;transform:scaleX(0.9359)">~ratesens_regular_x</div>
<div class="t" style="left:7px;top:88px;;transform:scaleX(0.8900)">In</div>
<div class="t" style="left:46px;top:88px;;transform:scaleX(0.9274)">Received</div>
<div class="t" style="left:126px;top:88px;;transform:scaleX(0.9128)">21-05-30 01:20:34.908</div>
<div class="t" style="left:306px;top:88px;;transform:scaleX(0.9305)">0x8</div>
<div class="t" style="left:366px;top:88px;;transform:scaleX(0.9305)">0x9</div>
<div class="t" style="left:426px;top:88px;;transform:scaleX(0.9328)">0xB11</div>
<div class="t" style="left:507px;top:88px;;transform:scaleX(0.9359)">~ratesens_regular_y</div>
<div class="t" style="left:7px;top:111px;;transform:scaleX(0.8900)">In</div>
<div class="t" style="left:46px;top:111px;;transform:scaleX(0.9274)">Received</div>
<div class="t" style="left:126px;top:111px;;transform:scaleX(0.9128)">21-05-30 01:20:34.908</div>
<div class="t" style="left:306px;top:111px;;transform:scaleX(0.9305)">0x8</div>
<div class="t" style="left:366px;top:111px;;transform:scaleX(0.9305)">0x9</div>
<div class="t" style="left:426px;top:111px;;transform:scaleX(0.9084)">0xB12</div>
<div class="t" style="left:507px;top:111px;;transform:scaleX(0.9359)">~ratesens_regular_z</div>
<div class="t" style="left:7px;top:134px;;transform:scaleX(0.8900)">In</div>
<div class="t" style="left:46px;top:134px;;transform:scaleX(0.9274)">Received</div>
<div class="t" style="left:126px;top:134px;;transform:scaleX(0.9128)">21-05-30 01:20:35.255</div>
<div class="t" style="left:306px;top:134px;;transform:scaleX(0.9305)">0x2</div>
<div class="t" style="left:366px;top:134px;;transform:scaleX(0.9047)">0x4</div>
<div class="t" style="left:426px;top:134px;;transform:scaleX(0.8621)">0xDE21</div>
<div class="t" style="left:507px;top:134px;;transform:scaleX(0.9842)">~regular_telemetry</div>
<div class="t" style="left:7px;top:157px;;transform:scaleX(0.8900)">In</div>
<div class="t" style="left:46px;top:157px;;transform:scaleX(0.9274)">Received</div>
<div class="t" style="left:126px;top:157px;;transform:scaleX(0.9128)">21-05-30 01:20:35.905</div>
<div class="t" style="left:306px;top:157px;;transform:scaleX(0.9305)">0x8</div>
<div class="t" style="left:366px;top:157px;;transform:scaleX(0.9305)">0x9</div>
<div class="t" style="left:426px;top:157px;;transform:scaleX(0.9084)">0xB13</div>
<div class="t" style="left:507px;top:157px;;transform:scaleX(0.9464)">~magnsens_regular_x</div>
<div class="t" style="left:7px;top:180px;;transform:scaleX(0.8900)">In</div>
<div class="t" style="left:46px;top:180px;;transform:scaleX(0.9274)">Received</div>
<div class="t" style="left:126px;top:180px;;transform:scaleX(0.9128)">21-05-30 01:20:35.905</div>
<div class="t" style="left:306px;top:180px;;transform:scaleX(0.9305)">0x8</div>
<div class="t" style="left:366px;top:180px;;transform:scaleX(0.9305)">0x9</div>
<div class="t" style="left:426px;top:180px;;transform:scaleX(0.9084)">0xB14</div>
<div class="t" style="left:507px;top:180px;;transform:scaleX(0.9464)">~magnsens_regular_y</div>
<div class="t" style="left:7px;top:203px;;transform:scaleX(0.8900)">In</div>
<div class="t" style="left:46px;top:203px;;transform:scaleX(0.9274)">Received</div>
<div class="t" style="left:126px;top:203px;;transform:scaleX(0.9128)">21-05-30 01:20:35.905</div>
<div class="t" style="left:306px;top:203px;;transform:scaleX(0.9305)">0x8</div>
<div class="t" style="left:366px;top:203px;;transform:scaleX(0.9305)">0x9</div>
<div class="t" style="left:426px;top:203px;;transform:scaleX(0.9084)">0xB15</div>
<div class="t" style="left:507px;top:203px;;transform:scaleX(0.9464)">~magnsens_regular_z</div>
<div class="t" style="left:7px;top:226px;;transform:scaleX(0.8900)">In</div>
<div class="t" style="left:46px;top:226px;;transform:scaleX(0.9274)">Received</div>
<div class="t" style="left:126px;top:226px;;transform:scaleX(0.9195)">21-05-30 01:20:35.911</div>
<div class="t" style="left:306px;top:226px;;transform:scaleX(0.9305)">0x8</div>
<div class="t" style="left:366px;top:226px;;transform:scaleX(0.9305)">0x9</div>
<div class="t" style="left:426px;top:226px;;transform:scaleX(0.9084)">0xB10</div>
<div class="t" style="left:507px;top:226px;;transform:scaleX(0.9359)">~ratesens_regular_x</div>
<div class="t" style="left:7px;top:249px;;transform:scaleX(0.8900)">In</div>
<div class="t" style="left:46px;top:249px;;transform:scaleX(0.9274)">Received</div>
<div class="t" style="left:126px;top:249px;;transform:scaleX(0.9195)">21-05-30 01:20:35.911</div>
<div class="t" style="left:306px;top:249px;;transform:scaleX(0.9305)">0x8</div>
<div class="t" style="left:366px;top:249px;;transform:scaleX(0.9305)">0x9</div>
<div class="t" style="left:426px;top:249px;;transform:scaleX(0.9328)">0xB11</div>
<div class="t" style="left:507px;top:249px;;transform:scaleX(0.9359)">~ratesens_regular_y</div>
<div class="t" style="left:7px;top:272px;;transform:scaleX(0.8900)">In</div>
<div class="t" style="left:46px;top:272px;;transform:scaleX(0.9274)">Received</div>
<div class="t" style="left:126px;top:272px;;transform:scaleX(0.9195)">21-05-30 01:20:35.911</div>
<div class="t" style="left:306px;top:272px;;transform:scaleX(0.9305)">0x8</div>
<div class="t" style="left:366px;top:272px;;transform:scaleX(0.9305)">0x9</div>
<div class="t" style="left:426px;top:272px;;transform:scaleX(0.9084)">0xB12</div>
<div class="t" style="left:507px;top:272px;;transform:scaleX(0.9359)">~ratesens_regular_z</div>
<div class="t" style="left:7px;top:295px;;transform:scaleX(0.8900)">In</div>
<div class="t" style="left:46px;top:295px;;transform:scaleX(0.9274)">Received</div>
<div class="t" style="left:126px;top:295px;;transform:scaleX(0.9128)">21-05-30 01:20:36.255</div>
<div class="t" style="left:306px;top:295px;;transform:scaleX(0.9305)">0x2</div>
<div class="t" style="left:366px;top:295px;;transform:scaleX(0.9047)">0x4</div>
<div class="t" style="left:426px;top:295px;;transform:scaleX(0.8621)">0xDE21</div>
<div class="t" style="left:507px;top:295px;;transform:scaleX(0.9842)">~regular_telemetry</div>
<div class="t" style="left:7px;top:318px;;transform:scaleX(0.8900)">In</div>
<div class="t" style="left:46px;top:318px;;transform:scaleX(0.9274)">Received</div>
<div class="t" style="left:126px;top:318px;;transform:scaleX(0.9128)">21-05-30 01:20:36.908</div>
<div class="t" style="left:306px;top:318px;;transform:scaleX(0.9305)">0x8</div>
<div class="t" style="left:366px;top:318px;;transform:scaleX(0.9305)">0x9</div>
<div class="t" style="left:426px;top:318px;;transform:scaleX(0.9084)">0xB13</div>
<div class="t" style="left:507px;top:318px;;transform:scaleX(0.9464)">~magnsens_regular_x</div>
<div class="t" style="left:7px;top:341px;;transform:scaleX(0.8900)">In</div>
<div class="t" style="left:46px;top:341px;;transform:scaleX(0.9274)">Received</div>
<div class="t" style="left:126px;top:341px;;transform:scaleX(0.9128)">21-05-30 01:20:36.908</div>
<div class="t" style="left:306px;top:341px;;transform:scaleX(0.9305)">0x8</div>
<div class="t" style="left:366px;top:341px;;transform:scaleX(0.9305)">0x9</div>
<div class="t" style="left:426px;top:341px;;transform:scaleX(0.9084)">0xB14</div>
<div class="t" style="left:507px;top:341px;;transform:scaleX(0.9464)">~magnsens_regular_y</div>
<div class="t" style="left:7px;top:364px;;transform:scaleX(0.8900)">In</div>
<div class="t" style="left:46px;top:364px;;transform:scaleX(0.9274)">Received</div>
<div class="t" style="left:126px;top:364px;;transform:scaleX(0.9128)">21-05-30 01:20:36.908</div>
<div class="t" style="left:306px;top:364px;;transform:scaleX(0.9305)">0x8</div>
<div class="t" style="left:366px;top:364px;;transform:scaleX(0.9305)">0x9</div>
<div class="t" style="left:426px;top:364px;;transform:scaleX(0.9084)">0xB15</div>
<div class="t" style="left:507px;top:364px;;transform:scaleX(0.9464)">~magnsens_regular_z</div>
<div class="t" style="left:7px;top:387px;;transform:scaleX(0.8900)">In</div>
<div class="t" style="left:46px;top:387px;;transform:scaleX(0.9274)">Received</div>
<div class="t" style="left:126px;top:387px;;transform:scaleX(0.9128)">21-05-30 01:20:36.914</div>
<div class="t" style="left:306px;top:387px;;transform:scaleX(0.9305)">0x8</div>
<div class="t" style="left:366px;top:387px;;transform:scaleX(0.9305)">0x9</div>
<div class="t" style="left:426px;top:387px;;transform:scaleX(0.9084)">0xB10</div>
<div class="t" style="left:507px;top:387px;;transform:scaleX(0.9359)">~ratesens_regular_x</div>
<div class="t" style="left:7px;top:410px;;transform:scaleX(0.8900)">In</div>
<div class="t" style="left:46px;top:410px;;transform:scaleX(0.9274)">Received</div>
<div class="t" style="left:126px;top:410px;;transform:scaleX(0.9128)">21-05-30 01:20:36.914</div>
<div class="t" style="left:306px;top:410px;;transform:scaleX(0.9305)">0x8</div>
<div class="t" style="left:366px;top:410px;;transform:scaleX(0.9305)">0x9</div>
<div class="t" style="left:426px;top:410px;;transform:scaleX(0.9328)">0xB11</div>
<div class="t" style="left:507px;top:410px;;transform:scaleX(0.9359)">~ratesens_regular_y</div>
<div class="t" style="left:7px;top:433px;;transform:scaleX(0.8900)">In</div>
<div class="t" style="left:46px;top:433px;;transform:scaleX(0.9274)">Received</div>
<div class="t" style="left:126px;top:433px;;transform:scaleX(0.9128)">21-05-30 01:20:36.914</div>
<div class="t" style="left:306px;top:433px;;transform:scaleX(0.9305)">0x8</div>
<div class="t" style="left:366px;top:433px;;transform:scaleX(0.9305)">0x9</div>
<div class="t" style="left:426px;top:433px;;transform:scaleX(0.9084)">0xB12</div>
<div class="t" style="left:507px;top:433px;;transform:scaleX(0.9359)">~ratesens_regular_z</div>
<div class="t" style="left:7px;top:456px;;transform:scaleX(0.8900)">In</div>
<div class="t" style="left:46px;top:456px;;transform:scaleX(0.9274)">Received</div>
<div class="t" style="left:126px;top:456px;;transform:scaleX(0.9128)">21-05-30 01:20:37.255</div>
<div class="t" style="left:306px;top:456px;;transform:scaleX(0.9305)">0x2</div>
<div class="t" style="left:366px;top:456px;;transform:scaleX(0.9047)">0x4</div>
<div class="t" style="left:426px;top:456px;;transform:scaleX(0.8621)">0xDE21</div>
<div class="t" style="left:507px;top:456px;;transform:scaleX(0.9842)">~regular_telemetry</div>
</div>
<div style="left:1235px;top:150px;width:15px;height:498px;background:#f0f0f0"></div>
<div style="left:1235px;top:584px;width:15px;height:46px;background:#cdcdcd"></div>
<svg style="position:absolute;left:0;top:0" width="1263" height="737"><path d="M1239.5 160.7 L1242.5 157.5 L1245.5 160.7" stroke="#5a5a5a" stroke-width="2.2" fill="none"/></svg>
<svg style="position:absolute;left:0;top:0" width="1263" height="737"><path d="M1239.5 637.1 L1242.5 640.3000000000001 L1245.5 637.1" stroke="#5a5a5a" stroke-width="2.2" fill="none"/></svg>
<div style="left:582px;top:648px;width:653px;height:15px;background:#f0f0f0"></div>
<div style="left:599px;top:648px;width:386px;height:15px;background:#cdcdcd"></div>
<svg style="position:absolute;left:0;top:0" width="1263" height="737"><path d="M591.7 652.4 L588.5 655.4 L591.7 658.4" stroke="#5a5a5a" stroke-width="2.2" fill="none"/></svg>
<svg style="position:absolute;left:0;top:0" width="1263" height="737"><path d="M1224.2 652.4 L1227.3999999999999 655.4 L1224.2 658.4" stroke="#5a5a5a" stroke-width="2.2" fill="none"/></svg>
<div style="left:1234px;top:647px;width:16px;height:17px;background:#d4d0c8"></div>
<div class="t" style="left:573px;top:679px;">In: 242</div>
<div style="left:608px;top:677px;width:1px;height:16px;background:#e6e4df"></div>
<div class="t" style="left:613px;top:679px;">Out: 0</div>
<div style="left:646px;top:677px;width:1px;height:16px;background:#e6e4df"></div>
<div class="t" style="left:651px;top:679px;">Free: 0</div>
<div style="left:686px;top:677px;width:1px;height:16px;background:#e6e4df"></div>
<div style="left:1257px;top:685px;width:2px;height:2px;background:#a8a8a8"></div>
<div style="left:1254px;top:688px;width:2px;height:2px;background:#a8a8a8"></div>
<div style="left:1257px;top:688px;width:2px;height:2px;background:#a8a8a8"></div>
<div style="left:1251px;top:691px;width:2px;height:2px;background:#a8a8a8"></div>
<div style="left:1254px;top:691px;width:2px;height:2px;background:#a8a8a8"></div>
<div style="left:1257px;top:691px;width:2px;height:2px;background:#a8a8a8"></div>
<div style="left:571px;top:695px;width:691px;height:1px;background:#6f6f6f"></div>
<div style="left:572px;top:695px;width:61px;height:20px;background:#fff"></div>
<div class="t" style="left:581.5px;top:699px;;transform:scaleX(0.9292)">History</div>
<div style="left:633px;top:696px;width:59px;height:17px;background:#f0f0f0"></div>
<div style="left:691px;top:696px;width:1px;height:17px;background:#d9d9d9"></div>
<div class="t" style="left:643px;top:699px;;transform:scaleX(0.8774)">Queue</div>
<div style="left:692px;top:696px;width:119px;height:17px;background:#f0f0f0"></div>
<div style="left:810px;top:696px;width:1px;height:17px;background:#d9d9d9"></div>
<div class="t" style="left:702px;top:699px;;transform:scaleX(0.8527)">Command Schedule</div>
<div style="left:811px;top:696px;width:43px;height:17px;background:#f0f0f0"></div>
<div style="left:853px;top:696px;width:1px;height:17px;background:#d9d9d9"></div>
<div class="t" style="left:822.5px;top:699px;;transform:scaleX(0.7919)">AVS</div>
<div style="left:854px;top:696px;width:94px;height:17px;background:#f0f0f0"></div>
<div style="left:947px;top:696px;width:1px;height:17px;background:#d9d9d9"></div>
<div class="t" style="left:865px;top:699px;;transform:scaleX(0.8945)">Magnetometer</div>
<div style="left:948px;top:696px;width:78px;height:17px;background:#f0f0f0"></div>
<div style="left:1025px;top:696px;width:1px;height:17px;background:#d9d9d9"></div>
<div class="t" style="left:958.5px;top:699px;;transform:scaleX(0.8566)">Sun Sensor</div>
<div style="left:1026px;top:696px;width:57px;height:17px;background:#f0f0f0"></div>
<div style="left:1082px;top:696px;width:1px;height:17px;background:#d9d9d9"></div>
<div class="t" style="left:1037px;top:699px;;transform:scaleX(0.8747)">Wheels</div>
<div style="left:1257px;top:726px;width:2px;height:2px;background:#a8a8a8"></div>
<div style="left:1254px;top:729px;width:2px;height:2px;background:#a8a8a8"></div>
<div style="left:1257px;top:729px;width:2px;height:2px;background:#a8a8a8"></div>
<div style="left:1251px;top:732px;width:2px;height:2px;background:#a8a8a8"></div>
<div style="left:1254px;top:732px;width:2px;height:2px;background:#a8a8a8"></div>
<div style="left:1257px;top:732px;width:2px;height:2px;background:#a8a8a8"></div>
<div style="left:0px;top:0px;width:1263px;height:1px;background:#6b6b6b"></div>
<div style="left:0px;top:0px;width:1px;height:737px;background:#6b6b6b"></div>
<div style="left:1262px;top:0px;width:1px;height:737px;background:#6b6b6b"></div>
<div style="left:0px;top:736px;width:1263px;height:1px;background:#6b6b6b"></div>
</body></html>
